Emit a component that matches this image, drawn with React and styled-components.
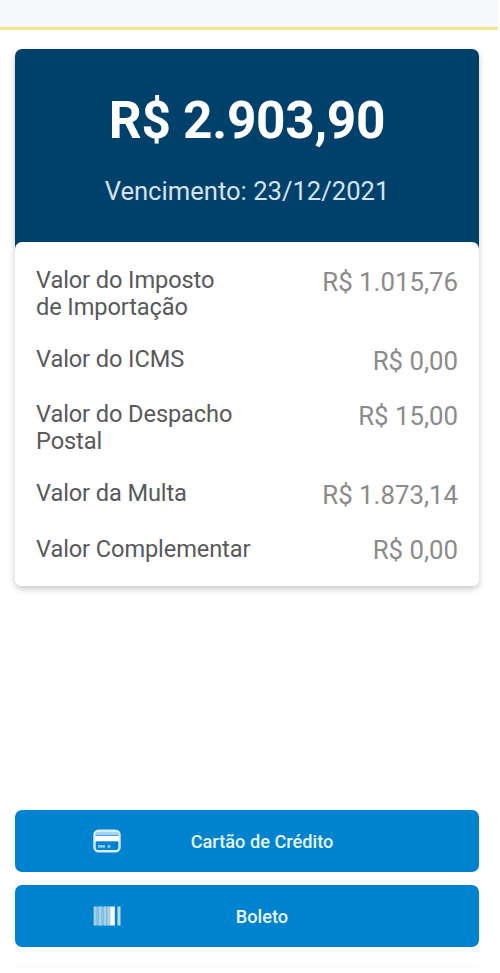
import React from 'react';
import styled, { createGlobalStyle } from 'styled-components';

const GlobalStyle = createGlobalStyle`
    * {
        box-sizing: border-box;
    }
    body {
        margin: 0;
        background: #fff;
        font-family: Roboto, sans-serif;
    }
`
const Page = styled.div`
    display: flex;
    flex-direction: column;
    width: 500px;
    height: 973px;
    overflow: hidden;
`
const TopBar = styled.div`
    flex: none;
    width: 498px;
    height: 30px;
    background: #f6f8fa;
    border-bottom: 3px solid #f3e792;
`
const Card = styled.section`
    width: 464px;
    height: 537px;
    margin: 19px 0 0 15px;
    border-radius: 7px;
    background: linear-gradient(#00416b 210px, #fff 210px);
    box-shadow: 0 3px 6px rgba(0, 0, 0, 0.22);
`
const CardHeader = styled.header`
    display: flex;
    flex-direction: column;
    align-items: center;
    height: 193px;
    padding-top: 41px;
    color: #fff;
`
const Total = styled.h1`
    margin: 0;
    font-size: 51.4px;
    font-weight: 700;
    line-height: 62px;
    letter-spacing: -0.3px;
`
const DueDate = styled.p`
    margin: 23px 0 0;
    color: #d5e2ea;
    font-size: 25.6px;
    line-height: 32px;
`
const CardBody = styled.div`
    display: flex;
    flex-direction: column;
    gap: 25.3px;
    height: 344px;
    padding: 24.6px 21px 0;
    border-radius: 7px;
    background: #fff;
`
const Row = styled.div`
    display: flex;
    justify-content: space-between;
    align-items: flex-start;
`
const Label = styled.span`
    padding-top: 0.4px;
    color: #58595b;
    font-size: 23.6px;
    letter-spacing: -0.1px;
    line-height: 26.7px;
    white-space: pre-line;
`
const Value = styled.span`
    color: #8b8b8b;
    font-size: 25.8px;
    line-height: 30px;
    white-space: nowrap;
`
const Actions = styled.div`
    display: flex;
    flex-direction: column;
    gap: 13px;
    width: 464px;
    margin: 224px 0 0 15px;
    padding-bottom: 18px;
    border-bottom: 4px solid #fcfcfc;
`
const PayButton = styled.button`
    display: grid;
    grid-template-columns: 28px 1fr 28px;
    align-items: center;
    height: 62px;
    padding: 0 48px 0 78px;
    border: none;
    border-radius: 7px;
    background: #0083cf;
    color: #e9f5fb;
    font-family: inherit;
    font-size: 18.2px;
    font-weight: 500;
    cursor: pointer;
`
const ButtonIcon = styled.svg`
    display: block;
    width: 28px;
    height: 24px;
`

const CardIcon = () => (
    <ButtonIcon viewBox="0 0 28 24">
        <rect x="1.5" y="1.8" width="25" height="20.4" rx="4" fill="#0083cf" stroke="#d6edf8" strokeWidth="2.4" />
        <path d="M3 4.6h22" stroke="#a5d2ec" strokeWidth="3.4" />
        <path d="M2 9.6h24" stroke="#fff" strokeWidth="5.4" />
        <path d="M5 17.4h7M14.5 17.4h3" stroke="#8cc8e8" strokeWidth="2.8" />
    </ButtonIcon>
);

const BarcodeIcon = () => (
    <ButtonIcon viewBox="0 0 28 24">
        <path d="M1 2.5h16v19H1z" fill="#85bfe1" />
        <path d="M1.6 2.5v19M7.2 2.5v19M12 2.5v19M15.8 2.5v19" stroke="#add6ec" strokeWidth="1.8" />
        <path d="M19.5 2.5v19" stroke="#fff" strokeWidth="4.6" />
        <path d="M26 2.5v19" stroke="#b9dcf0" strokeWidth="3" />
    </ButtonIcon>
);

const charges = [
    { label: 'Valor do Imposto\nde Importação', value: 'R$ 1.015,76' },
    { label: 'Valor do ICMS', value: 'R$ 0,00' },
    { label: 'Valor do Despacho\nPostal', value: 'R$ 15,00' },
    { label: 'Valor da Multa', value: 'R$ 1.873,14' },
    { label: 'Valor Complementar', value: 'R$ 0,00' },
];

const App = () => {
    return (
        <Page>
            <GlobalStyle />
            <TopBar />
            <Card>
                <CardHeader>
                    <Total>R$ 2.903,90</Total>
                    <DueDate>Vencimento: 23/12/2021</DueDate>
                </CardHeader>
                <CardBody>
                    {charges.map(({ label, value }) => (
                        <Row key={label}>
                            <Label>{label}</Label>
                            <Value>{value}</Value>
                        </Row>
                    ))}
                </CardBody>
            </Card>
            <Actions>
                <PayButton>
                    <CardIcon />
                    <span>Cartão de Crédito</span>
                </PayButton>
                <PayButton>
                    <BarcodeIcon />
                    <span>Boleto</span>
                </PayButton>
            </Actions>
        </Page>
    );
}

export default App;
